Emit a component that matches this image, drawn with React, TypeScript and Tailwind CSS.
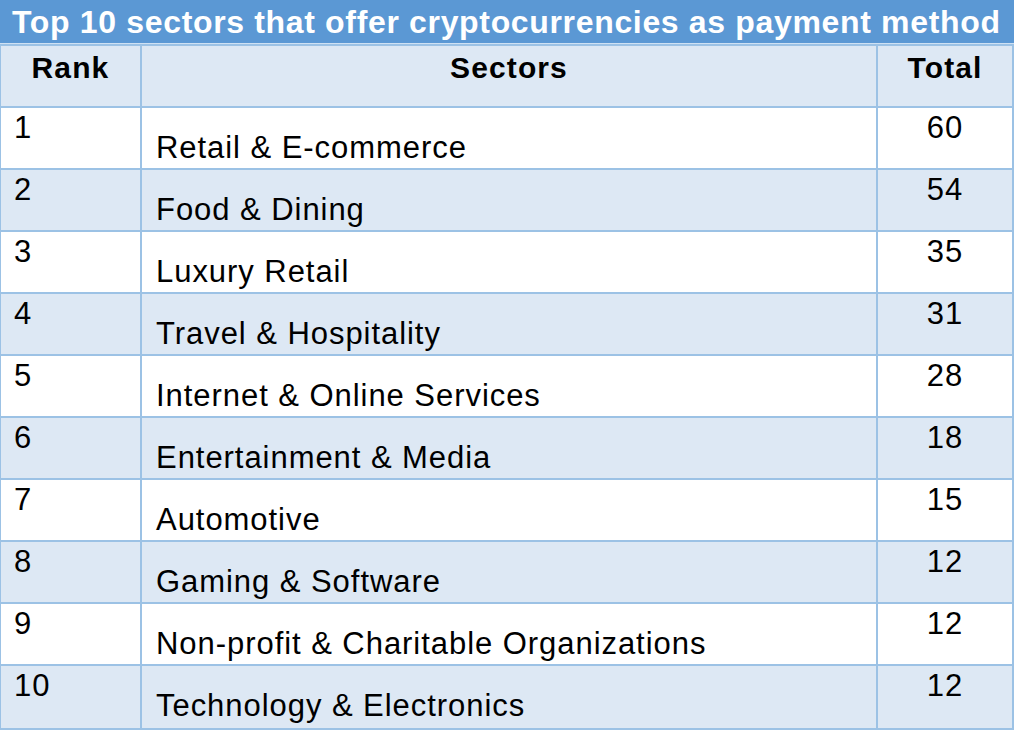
import React from "react";

const rows: [string, string, string][] = [
  ["1", "Retail & E-commerce", "60"],
  ["2", "Food & Dining", "54"],
  ["3", "Luxury Retail", "35"],
  ["4", "Travel & Hospitality", "31"],
  ["5", "Internet & Online Services", "28"],
  ["6", "Entertainment & Media", "18"],
  ["7", "Automotive", "15"],
  ["8", "Gaming & Software", "12"],
  ["9", "Non-profit & Charitable Organizations", "12"],
  ["10", "Technology & Electronics", "12"],
];

export default function App() {
  return (
    <div
      className="w-[1016px] h-[738px] bg-white text-black overflow-hidden"
      style={{ fontFamily: '"Liberation Sans", Arial, sans-serif' }}
    >
      <div className="w-[1014px] h-[43px] bg-[#5b98d4] text-white font-bold text-[32px] leading-[44px] pl-[12px] tracking-[0.66px] whitespace-nowrap">
        Top 10 sectors that offer cryptocurrencies as payment method
      </div>
      <div className="w-[1014px] h-[1px] bg-[#cfe1f3]" />
      <div className="w-[1014px] border-t-2 border-r-2 border-l border-[#9cc2e5]">
        <div className="grid grid-cols-[139px_2px_734px_2px_1fr] h-[62px] border-b-2 border-[#9cc2e5] bg-[#dde8f4] font-bold text-[30px] leading-[34px] tracking-[1.1px]">
          <div className="pt-[5px] text-center">Rank</div>
          <div className="bg-[#9cc2e5]" />
          <div className="pt-[5px] text-center">Sectors</div>
          <div className="bg-[#9cc2e5]" />
          <div className="pt-[5px] text-center">Total</div>
        </div>
        {rows.map(([rank, sector, total], i) => (
          <div
            key={rank}
            className={
              "grid grid-cols-[139px_2px_734px_2px_1fr] border-b-2 border-[#9cc2e5] text-[31px] leading-[34px] tracking-[0.95px] " +
              (i === rows.length - 1 ? "h-[64px] " : "h-[62px] ") +
              (i % 2 === 0 ? "bg-white" : "bg-[#dde8f4]")
            }
          >
            <div className="pt-[3px] pl-[13px]">{rank}</div>
            <div className="bg-[#9cc2e5]" />
            <div className="pt-[23px] pl-[14px] whitespace-nowrap">{sector}</div>
            <div className="bg-[#9cc2e5]" />
            <div className="pt-[3px] text-center">{total}</div>
          </div>
        ))}
      </div>
    </div>
  );
}
